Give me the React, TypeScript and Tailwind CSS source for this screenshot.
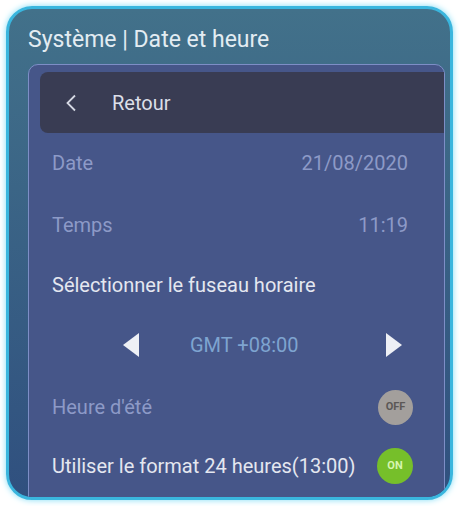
import React from 'react';

function Toggle({ on }: { on: boolean }): JSX.Element {
  return (
    <div
      className={
        on
          ? '-mr-[5px] w-[36px] h-[36px] rounded-full bg-[#76bf2a] flex items-center justify-center text-[11px] font-bold text-[#d6f5b0]'
          : '-mr-[5px] w-[35px] h-[35px] rounded-full bg-[#a39f9c] flex items-center justify-center text-[11px] font-bold text-[#5b5856]'
      }
    >
      {on ? 'ON' : 'OFF'}
    </div>
  );
}

function Triangle({ dir }: { dir: 'left' | 'right' }): JSX.Element {
  return (
    <svg width="18" height="24" viewBox="0 0 18 24">
      {dir === 'left' ? (
        <polygon points="17,0 17,24 1,12" fill="#eef0f5" />
      ) : (
        <polygon points="1,0 1,24 17,12" fill="#eef0f5" />
      )}
    </svg>
  );
}

export default function App(): JSX.Element {
  return (
    <div
      className="w-[459px] h-[506px] bg-white p-[6px]"
      style={{ fontFamily: 'Roboto, "Noto Sans", sans-serif' }}
    >
      <div className="h-full flex flex-col rounded-[26px] border-[3px] border-[#3ab6de] overflow-hidden bg-gradient-to-b from-[#42718a] to-[#30507f] shadow-[0_0_6px_#7fdcf5]">
        <h1 className="pt-[19px] pl-[19px] text-[23px] leading-[24px] text-[#e3ecf2]">
          Système | Date et heure
        </h1>
        <div className="mt-[12px] ml-[19px] mr-[5px] flex-1 -mb-[20px] rounded-[10px] border border-[#7d8ec6] bg-[#465689]">
          <div className="mt-[7px] ml-[11px] h-[61px] rounded-l-[8px] bg-[#393c53] flex items-center">
            <svg width="12" height="18" viewBox="0 0 12 18" className="ml-[25px]">
              <polyline
                points="10,1.5 2.5,9 10,16.5"
                fill="none"
                stroke="#d4d7e2"
                strokeWidth="1.8"
              />
            </svg>
            <span className="ml-[35px] text-[20px] text-[#dcdfe8]">Retour</span>
          </div>
          <div className="pl-[23px] pr-[36px] text-[20px]">
            <div className="h-[60px] flex items-center justify-between text-[#8d9ac7]">
              <span>Date</span>
              <span>21/08/2020</span>
            </div>
            <div className="h-[64px] flex items-center justify-between text-[#8d9ac7]">
              <span>Temps</span>
              <span>11:19</span>
            </div>
            <div className="h-[56px] flex items-center text-[#e4e7f0]">
              Sélectionner le fuseau horaire
            </div>
            <div className="h-[64px] flex items-center pl-[70px] pr-[5px]">
              <Triangle dir="left" />
              <span className="ml-[50px] flex-1 text-[#7ea4d0]">GMT +08:00</span>
              <Triangle dir="right" />
            </div>
            <div className="h-[60px] flex items-center justify-between text-[#8d9ac7]">
              <span>Heure d'été</span>
              <Toggle on={false} />
            </div>
            <div className="h-[58px] flex items-center justify-between text-[#e4e7f0]">
              <span>Utiliser le format 24 heures(13:00)</span>
              <Toggle on />
            </div>
          </div>
        </div>
      </div>
    </div>
  );
}
